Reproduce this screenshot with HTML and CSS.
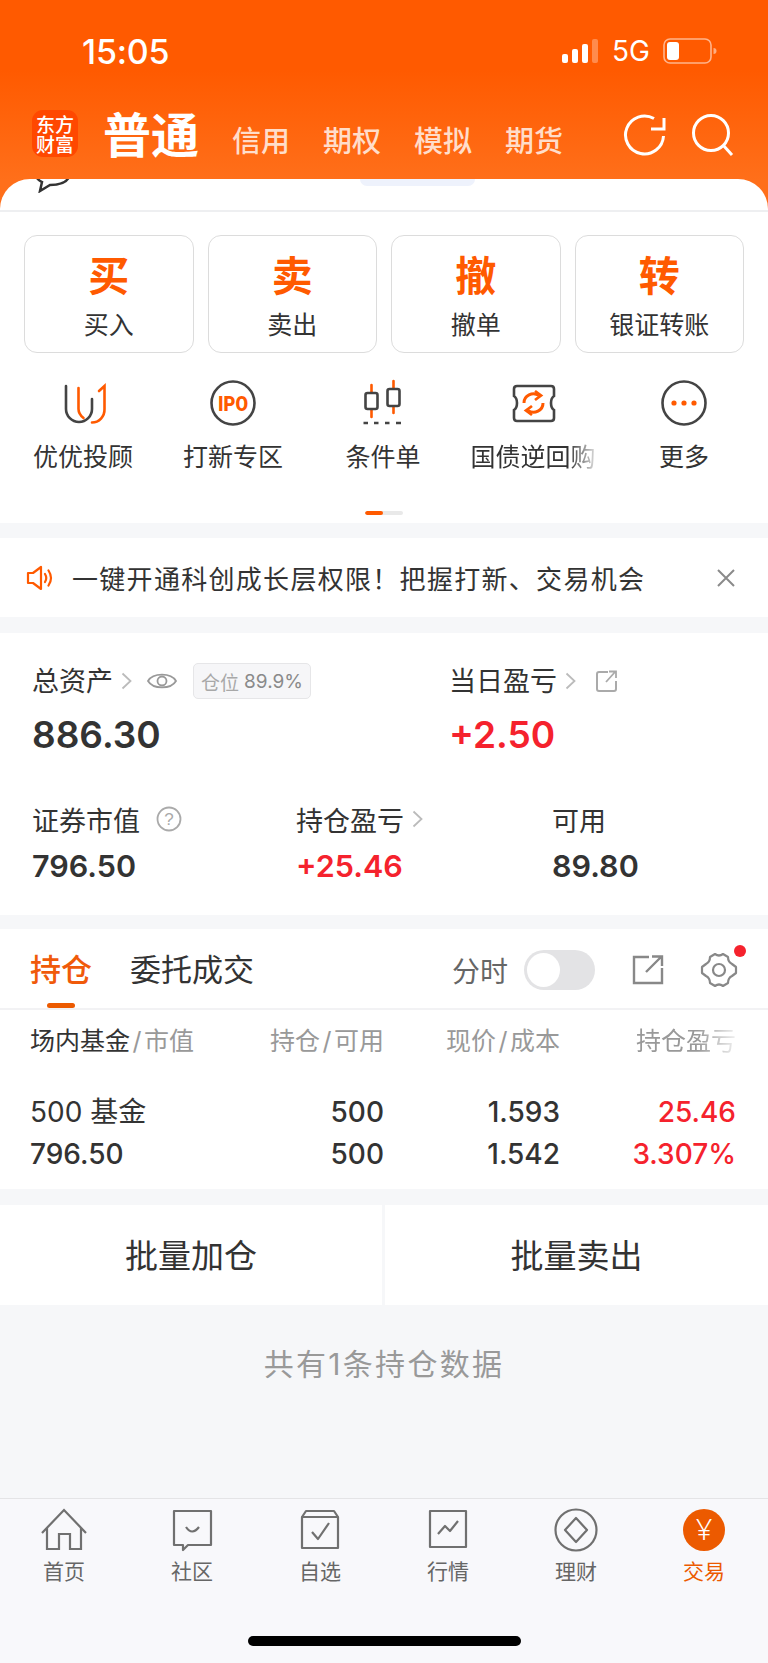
FILE: index.html
```html
<!DOCTYPE html>
<html lang="zh-CN">
<head>
<meta charset="utf-8">
<title>交易</title>
<link rel="stylesheet" href="styles.css">
</head>
<body>
<div class="page">
  <div class="hero">
    <div class="status">
      <span class="time">15:05</span>
      <div class="status-right">
        <svg class="signal" width="38" height="24" viewBox="0 0 38 24"><rect x="0" y="15" width="6" height="9" rx="2" fill="#fff"/><rect x="10" y="10" width="6" height="14" rx="2" fill="#fff"/><rect x="20" y="5" width="6" height="19" rx="2" fill="#fff"/><rect x="30" y="0" width="6" height="24" rx="2" fill="#fff" opacity=".3"/></svg>
        <span class="net">5G</span>
        <svg class="battery" width="54" height="26" viewBox="0 0 54 26"><rect x="1" y="1" width="47" height="24" rx="6" fill="none" stroke="#fff" stroke-opacity=".55" stroke-width="1.6"/><rect x="4" y="4" width="12" height="18" rx="3" fill="#fff"/><path d="M50.500 10 a3 3 0 0 1 0 6z" fill="#fff" opacity=".5"/></svg>
      </div>
    </div>
    <div class="nav">
      <div class="logo"><span>东方财富</span></div>
      <span class="nav-main">普通</span>
      <div class="nav-tabs"><span>信用</span><span>期权</span><span>模拟</span><span>期货</span></div>
      <div class="nav-icons">
        <svg width="44" height="44" viewBox="0 0 44 44" fill="none" stroke="#fff" stroke-width="3"><path d="M40.500 23 A19 19 0 1 1 31 5.500"/><path d="M28 16 H41 V5"/></svg>
        <svg width="46" height="44" viewBox="0 0 46 44" fill="none" stroke="#fff" stroke-width="3"><circle cx="20" cy="20" r="17.500"/><path d="M32 32 L41 42"/></svg>
      </div>
    </div>
    <div class="card">
      <div class="peek">
        <svg class="peek-chat" width="36" height="14" viewBox="0 0 36 14" fill="none" stroke="#333" stroke-width="2.500"><path d="M1 -8 C1 0 6 2 8 3 L6 12 L16 6 C24 6 32 5 35 -2"/></svg>
        <span class="peek-pill"></span>
      </div>
      <div class="actions">
        <a class="action"><b>买</b><span>买入</span></a>
        <a class="action"><b>卖</b><span>卖出</span></a>
        <a class="action"><b>撤</b><span>撤单</span></a>
        <a class="action"><b>转</b><span>银证转账</span></a>
      </div>
      <div class="tools">
        <div class="tool">
          <svg width="48" height="48" viewBox="-3 0 48 48" fill="none" stroke-width="2.600" stroke-linecap="round"><path d="M4 7 V30 a13 13 0 0 0 26 0 V20" stroke="#444"/><path d="M16.500 9 V30 q0 5 5 9" stroke="#ff5a00"/><path d="M37 12 L42.500 7 V30 a12.500 13 0 0 1 -12.500 13.500" stroke="#ff5a00"/></svg>
          <span>优优投顾</span>
        </div>
        <div class="tool">
          <svg width="48" height="48" viewBox="0 0 48 48"><circle cx="24" cy="24" r="21.500" fill="none" stroke="#444" stroke-width="2.600"/><text x="24" y="31.500" class="ipo" textLength="30" lengthAdjust="spacingAndGlyphs">IPO</text></svg>
          <span>打新专区</span>
        </div>
        <div class="tool">
          <svg width="48" height="48" viewBox="0 0 48 48" fill="none" stroke-width="2.600" stroke-linecap="round"><path d="M12.500 6 V38 M34.500 2 V34" stroke="#ff5a00"/><rect x="6.500" y="14" width="12" height="16" rx="2" fill="#fff" stroke="#444"/><rect x="28.500" y="10" width="12" height="17" rx="2" fill="#fff" stroke="#444"/><path d="M4.500 44 H9 M15 44 H19.500 M26 44 H30.500 M37 44 H42" stroke="#444" stroke-width="2.400" stroke-linecap="butt"/></svg>
          <span>条件单</span>
        </div>
        <div class="tool">
          <svg width="48" height="48" viewBox="0 0 48 48" fill="none" stroke-width="2.600"><path d="M8 7 H42 q3 0 3 3 V17 q-3 2 -3 7 t3 7 V39 q0 3 -3 3 H8 q-3 0 -3 -3 V31 q3 -2 3 -7 t-3 -7 V10 q0 -3 3 -3z" stroke="#444"/><path d="M15 24 a9.500 9 0 0 1 15 -7.500 M34 24 a9.500 9 0 0 1 -15 7.500" stroke="#ff5a00" stroke-width="3"/><path d="M26 12 L32 16.500 L26 21 M23 36 L17 31.500 L23 27" stroke="#ff5a00" stroke-width="2.800"/></svg>
          <span class="fade">国债逆回购</span>
        </div>
        <div class="tool tool-last">
          <svg width="48" height="48" viewBox="0 0 48 48"><circle cx="24" cy="24" r="21.500" fill="none" stroke="#444" stroke-width="2.600"/><circle cx="14" cy="24" r="2.600" fill="#ff5a00"/><circle cx="24" cy="24" r="2.600" fill="#ff5a00"/><circle cx="34" cy="24" r="2.600" fill="#ff5a00"/></svg>
          <span>更多</span>
        </div>
      </div>
      <div class="dots"><i></i></div>
    </div>
  </div>

  <div class="notice">
    <svg width="28" height="26" viewBox="0 0 28 26" fill="none" stroke="#ff5a00" stroke-width="2.200" stroke-linejoin="round"><path d="M2 8 H7 L15 2 V24 L7 18 H2z"/><path d="M19 9 q2.500 4 0 8 M22.500 5.500 q5 7.500 0 15" stroke-linecap="round"/></svg>
    <span class="notice-text">一键开通科创成长层权限&#xFF01;把握打新、交易机会</span>
    <svg class="notice-close" width="18" height="18" viewBox="0 0 18 18" stroke="#8a8a8a" stroke-width="2"><path d="M1 1 L17 17 M17 1 L1 17"/></svg>
  </div>

  <div class="assets">
    <div class="assets-top">
      <div>
        <div class="label">
          <span class="label-text">总资产</span>
          <svg class="chev" width="11" height="18" viewBox="0 0 11 18" fill="none" stroke="#bbb" stroke-width="1.800"><path d="M1.500 1.500 L9.500 9 L1.500 16.500"/></svg>
          <svg class="eye" width="30" height="20" viewBox="0 0 30 20" fill="none" stroke="#999" stroke-width="1.800"><path d="M1 10 C6 1.500 24 1.500 29 10 C24 18.500 6 18.500 1 10z"/><circle cx="15" cy="10" r="4.500"/></svg>
          <span class="tag"><em>仓位</em> 89.9%</span>
        </div>
        <div class="value big">886.30</div>
      </div>
      <div>
        <div class="label">
          <span class="label-text">当日盈亏</span>
          <svg class="chev" width="11" height="18" viewBox="0 0 11 18" fill="none" stroke="#bbb" stroke-width="1.800"><path d="M1.500 1.500 L9.500 9 L1.500 16.500"/></svg>
          <svg class="share-sm" width="22" height="22" viewBox="0 0 22 22" fill="none" stroke="#aaa" stroke-width="2"><path d="M12 2 H3 a2 2 0 0 0 -2 2 V19 a2 2 0 0 0 2 2 H18 a2 2 0 0 0 2 -2 V11"/><path d="M10 12 L19 2 M13 1.500 H20 V8" stroke-width="1.800"/></svg>
        </div>
        <div class="value big red">+2.50</div>
      </div>
    </div>
    <div class="assets-bottom">
      <div>
        <div class="label">
          <span>证券市值</span>
          <svg class="help" width="26" height="26" viewBox="0 0 26 26"><circle cx="13" cy="13" r="11.500" fill="none" stroke="#aaa" stroke-width="1.800"/><text x="13" y="19" class="help-mark">?</text></svg>
        </div>
        <div class="value mid">796.50</div>
      </div>
      <div>
        <div class="label">
          <span>持仓盈亏</span>
          <svg class="chev" width="11" height="18" viewBox="0 0 11 18" fill="none" stroke="#bbb" stroke-width="1.800"><path d="M1.500 1.500 L9.500 9 L1.500 16.500"/></svg>
        </div>
        <div class="value mid red">+25.46</div>
      </div>
      <div>
        <div class="label"><span>可用</span></div>
        <div class="value mid">89.80</div>
      </div>
    </div>
  </div>

  <div class="positions">
    <div class="pos-tabs">
      <span class="pos-tab active">持仓</span>
      <span class="pos-tab">委托成交</span>
      <div class="pos-tools">
        <span class="split">分时</span>
        <span class="toggle"><i></i></span>
        <svg class="share" width="32" height="30" viewBox="0 0 32 30" fill="none" stroke="#888" stroke-width="2.400"><path d="M17 2 H2 V28 H30 V13"/><path d="M14 17 L29 2 M20 1.500 H30 V11"/></svg>
        <span class="gear">
          <svg width="38" height="38" viewBox="0 0 38 38" fill="none" stroke="#888" stroke-width="2.200"><path d="M15 3 Q19 6 23 3 L28 6 Q28 11 32 13 L36 16 V22 L32 25 Q28 27 28 32 L23 35 Q19 32 15 35 L10 32 Q10 27 6 25 L2 22 V16 L6 13 Q10 11 10 6z" stroke-linejoin="round"/><circle cx="19" cy="19" r="6"/></svg>
          <i></i>
        </span>
      </div>
    </div>
    <div class="pos-head">
      <span class="head-first"><b>场内基金</b><i>/</i>市值</span>
      <span>持仓<i>/</i>可用</span>
      <span>现价<i>/</i>成本</span>
      <span class="fade">持仓盈亏</span>
    </div>
    <div class="pos-row">
      <span class="cell-first">500 基金</span><span>500</span><span>1.593</span><span class="red">25.46</span>
      <span class="cell-first">796.50</span><span>500</span><span>1.542</span><span class="red">3.307%</span>
    </div>
  </div>

  <div class="batch">
    <span>批量加仓</span>
    <span>批量卖出</span>
  </div>

  <div class="summary"><span>共有1条持仓数据</span></div>

  <div class="tabbar">
    <div class="tabs">
      <div class="tab">
        <svg width="48" height="44" viewBox="0 0 48 44" fill="none" stroke="#707070" stroke-width="2.200"><path d="M2 25 L24 2 L46 25"/><path d="M7 20 V41 H19 V26 H30 V41 H41 V20"/></svg>
        <span>首页</span>
      </div>
      <div class="tab">
        <svg width="48" height="44" viewBox="0 0 48 44" fill="none" stroke="#707070" stroke-width="2.200" stroke-linejoin="round"><path d="M6 3 H43 V37 H20 L15 42 V37 H6z"/><path d="M18 19 q6 9 13 0"/></svg>
        <span>社区</span>
      </div>
      <div class="tab">
        <svg width="48" height="44" viewBox="0 0 48 44" fill="none" stroke="#707070" stroke-width="2.200" stroke-linejoin="round"><path d="M6 9 H42 V40 H6z"/><path d="M6 9 L10 3 H38 L42 9"/><path d="M16 24 L22 31 L33 15"/></svg>
        <span>自选</span>
      </div>
      <div class="tab">
        <svg width="48" height="44" viewBox="0 0 48 44" fill="none" stroke="#707070" stroke-width="2.200" stroke-linejoin="round"><path d="M6 3 H42 V39 H6z"/><path d="M14 26 L21 18 L26 23 L34 13"/></svg>
        <span>行情</span>
      </div>
      <div class="tab">
        <svg width="48" height="44" viewBox="0 0 48 44" fill="none" stroke="#707070" stroke-width="2.200" stroke-linejoin="round"><circle cx="24" cy="22" r="20.500"/><path d="M24 10 L35 22 L24 34 L13 22z"/></svg>
        <span>理财</span>
      </div>
      <div class="tab tab-active">
        <svg width="48" height="44" viewBox="0 0 48 44"><circle cx="24" cy="22" r="21" fill="#ec5a00"/><text x="24" y="32" class="yen">¥</text></svg>
        <span>交易</span>
      </div>
    </div>
    <div class="home-bar"></div>
  </div>
</div>
</body>
</html>
```

FILE: styles.css
```css
* { box-sizing: border-box; }
html, body { margin: 0; padding: 0; }
body {
  font-family: Inter, "Noto Sans CJK SC", sans-serif;
  color: #333;
  background: #f6f7f9;
}
.page {
  width: 768px;
  height: 1663px;
  overflow: hidden;
  display: flex;
  flex-direction: column;
}

/* header */
.hero {
  background: linear-gradient(180deg, #ff5a00 0, #ff5a00 70px, #ff6f1a 180px, #ff6f1a 100%) no-repeat;
  background-size: 100% 215px;
  background-color: #f6f7f9;
}
.status {
  height: 102px;
  display: flex;
  align-items: center;
  justify-content: space-between;
  padding: 0 51px 0 82px;
  color: #fff;
}
.time { font-size: 34px; font-weight: 500; letter-spacing: -0.2px; }
.status-right { display: flex; align-items: center; }
.signal { margin-right: 12px; }
.net { font-size: 28px; font-weight: 400; margin-right: 13px; }
.nav {
  height: 77px;
  padding: 8px 0 0 32px;
  display: flex;
  align-items: flex-start;
  color: #fff;
}
.logo {
  width: 46px;
  height: 47px;
  border-radius: 11px;
  background: #ff4800;
  display: flex;
  align-items: center;
  justify-content: center;
  font-family: "Noto Sans CJK SC", sans-serif;
  font-size: 19px;
  font-weight: 500;
  line-height: 20px;
}
.logo span { width: 38px; text-align: center; }
.nav-main {
  margin-left: 25px;
  font-family: "Noto Sans CJK SC", sans-serif;
  font-size: 48px;
  font-weight: 700;
  line-height: 50px;
  margin-top: -3px;
}
.nav-tabs {
  margin-left: 33px;
  margin-top: 14px;
  display: flex;
  gap: 33px;
  font-size: 29px;
  line-height: 36px;
  font-weight: 500;
  color: rgba(255, 255, 255, .78);
}
.nav-icons {
  margin-left: 60px;
  margin-top: 3px;
  display: flex;
  gap: 24px;
}

/* card */
.card {
  background: #fff;
  border-radius: 30px 30px 0 0;
  overflow: hidden;
}
.peek {
  height: 33px;
  border-bottom: 2px solid #eeeff1;
  padding-left: 34px;
  display: flex;
  align-items: flex-start;
}
.peek-pill {
  width: 115px;
  height: 7px;
  margin-left: 290px;
  background: #eef2fc;
  border-radius: 0 0 12px 12px;
}
.actions {
  padding: 23px 0 0 24px;
  display: grid;
  grid-template-columns: repeat(4, 169.500px);
  column-gap: 14px;
}
.action {
  height: 118px;
  border: 1.500px solid #dcdcdc;
  border-radius: 13px;
  display: flex;
  flex-direction: column;
  align-items: center;
  font-family: "Noto Sans CJK SC", sans-serif;
}
.action b {
  margin-top: 11px;
  font-size: 41px;
  line-height: 52px;
  font-weight: 700;
  color: #ff5a00;
}
.action span {
  margin-top: 9px;
  font-size: 25px;
  line-height: 30px;
  color: #333;
}
.tools {
  padding: 26px 0 0 8px;
  display: grid;
  grid-template-columns: repeat(5, 150px);
}
.tool {
  display: flex;
  flex-direction: column;
  align-items: center;
  font-size: 25px;
  line-height: 34px;
  color: #333;
}
.tool span { margin-top: 13px; white-space: nowrap; }
.tool-last { padding-left: 2px; }
.fade {
  -webkit-mask-image: linear-gradient(90deg, #000 78%, rgba(0,0,0,.15) 100%);
  mask-image: linear-gradient(90deg, #000 78%, rgba(0,0,0,.15) 100%);
}
.ipo {
  font-family: Roboto, sans-serif;
  font-size: 21px;
  font-weight: 900;
  fill: #ff5a00;
  text-anchor: middle;
}
.dots {
  width: 38px;
  height: 4px;
  margin: 37px auto 8px;
  border-radius: 2px;
  background: #e9e9e9;
  overflow: hidden;
}
.dots i { display: block; width: 18px; height: 4px; border-radius: 2px; background: #ff5a00; }

/* notice */
.notice {
  margin-top: 15px;
  height: 79px;
  background: #fff;
  display: flex;
  align-items: center;
  padding: 0 33px 0 26px;
}
.notice-text {
  margin-left: 18px;
  font-size: 26px;
  letter-spacing: 1.300px;
  color: #333;
  white-space: nowrap;
}
.notice-close { margin-left: auto; }

/* assets */
.assets {
  margin-top: 16px;
  height: 282px;
  background: #fff;
  padding: 30px 0 0 32px;
}
.assets-top { display: grid; grid-template-columns: 417px 1fr; }
.assets-bottom { display: grid; grid-template-columns: 264px 256px 1fr; margin-top: 44px; }
.label {
  height: 36px;
  display: flex;
  align-items: center;
  font-size: 27px;
  color: #333;
}
.label-text { margin-top: -4px; }
.chev { margin-left: 8px; }
.eye { margin-left: 15px; }
.share-sm { margin-left: 20px; }
.help { margin-left: 16px; }
.help-mark { font-family: "Liberation Sans", sans-serif; font-size: 17px; fill: #aaa; text-anchor: middle; }
.tag {
  margin-left: 16px;
  height: 36px;
  width: 118px;
  border: 1px solid #e6e6e8;
  border-radius: 5px;
  background: #f6f6f8;
  display: flex;
  align-items: center;
  justify-content: center;
  gap: 5px;
  font-size: 19px;
  color: #8a8a8a;
}
.tag em { font-style: normal; color: #a8a8a8; }
.value { font-weight: 600; color: #333; }
.big { font-size: 37px; line-height: 44px; margin-top: 14px; }
.mid { font-size: 30.500px; line-height: 38px; margin-top: 10px; }
.value.red, .red { color: #f5222d; }

/* positions */
.positions {
  margin-top: 14px;
  height: 260px;
  background: #fff;
}
.pos-tabs {
  height: 81px;
  border-bottom: 2px solid #f2f2f4;
  padding: 0 30px 0 30px;
  display: flex;
  align-items: center;
  gap: 38px;
}
.pos-tab { font-size: 31px; color: #333; line-height: 40px; margin-top: 2px; }
.pos-tab.active { color: #f05a0a; font-weight: 500; position: relative; }
.pos-tab.active::after {
  content: "";
  position: absolute;
  left: 17px;
  width: 28px;
  bottom: -18px;
  height: 5px;
  border-radius: 3px;
  background: #ec5a00;
}
.pos-tools { margin-left: auto; display: flex; align-items: center; margin-top: 2px; }
.split { font-size: 28px; color: #666; }
.toggle {
  margin-left: 16px;
  width: 71px;
  height: 40px;
  border-radius: 20px;
  background: #e3e3e5;
  padding: 3px;
}
.toggle i { display: block; width: 33px; height: 34px; border-radius: 50%; background: #fff; }
.share { margin-left: 37px; }
.gear { margin-left: 36px; position: relative; display: flex; }
.gear i {
  position: absolute;
  right: -8px;
  top: -6px;
  width: 12px;
  height: 12px;
  border-radius: 50%;
  background: #f5222d;
}
.pos-head, .pos-row {
  display: grid;
  grid-template-columns: 178px 176px 176px 176px;
  margin-left: 30px;
  white-space: nowrap;
}
.pos-head {
  margin-top: 13px;
  font-size: 25px;
  line-height: 36px;
  color: #999;
  text-align: right;
}
.pos-head b { font-weight: 400; color: #333; }
.pos-head i { font-style: normal; margin: 0 2.500px; }
.pos-head .head-first { text-align: left; }
.pos-row {
  margin-top: 34px;
  row-gap: 4px;
  font-size: 28px;
  line-height: 38px;
  font-weight: 500;
  text-align: right;
  color: #333;
}
.pos-row .cell-first { text-align: left; }
.pos-row .cell-first:first-child { font-weight: 400; }

/* batch */
.batch {
  margin-top: 16px;
  height: 100px;
  display: grid;
  grid-template-columns: 382px 383px;
  column-gap: 3px;
  font-size: 33px;
  color: #333;
}
.batch span {
  background: #fff;
  display: flex;
  align-items: center;
  justify-content: center;
  padding-bottom: 2px;
}

/* summary */
.summary {
  flex: 1;
  text-align: center;
  padding-top: 38px;
  font-size: 30px;
  letter-spacing: 2.300px;
  line-height: 42px;
  color: #999;
}

/* tab bar */
.tabbar {
  height: 165px;
  background: #f8f8fb;
  border-top: 1.500px solid #e4e4e6;
}
.tabs {
  padding-top: 9px;
  display: grid;
  grid-template-columns: repeat(6, 128px);
}
.tab {
  display: flex;
  flex-direction: column;
  align-items: center;
  font-size: 21px;
  line-height: 28px;
  color: #666;
}
.tab span { margin-top: 6px; }
.tab-active { color: #ec5a00; }
.yen { font-family: "Noto Sans", sans-serif; font-weight: 300; font-size: 29px; fill: #fff; text-anchor: middle; }
.home-bar {
  width: 273px;
  height: 10px;
  margin: 50px auto 0;
  border-radius: 5px;
  background: #000;
}
```
